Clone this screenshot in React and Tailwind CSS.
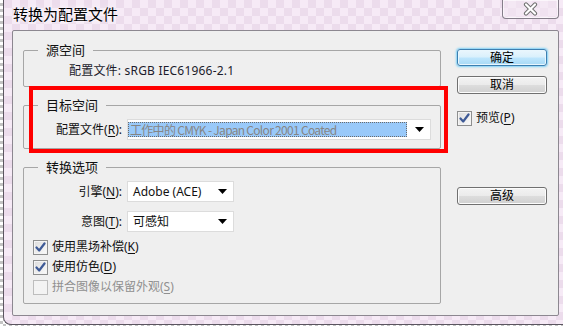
import React from "react";

function Arrow() {
  return (
    <svg width="9" height="5" viewBox="0 0 9 5" className="shrink-0">
      <path d="M0 0 H9 L4.5 5 Z" fill="#000" />
    </svg>
  );
}

function Check({ checked, disabled, children }) {
  return (
    <div className="flex items-center h-[20px]">
      <span
        className={
          disabled
            ? "w-[15px] h-[15px] border border-[#bdbdbd] bg-[#f3f3f3] shrink-0"
            : "w-[15px] h-[15px] border border-[#8e8f8f] bg-[linear-gradient(135deg,#dcdcdc,#fbfbfb)] shrink-0 flex items-center justify-center shadow-[inset_0_0_0_1px_#f4f4f4]"
        }
      >
        {checked && (
          <svg width="11" height="11" viewBox="0 0 11 11">
            <path d="M1.5 5.5 L4.2 8.5 L9.5 1.5" fill="none" stroke="#3e5a96" strokeWidth="2.2" strokeLinecap="round" strokeLinejoin="round" />
          </svg>
        )}
      </span>
      <span className={disabled ? "ml-[4px] text-[12px] leading-[16px] text-[#8f8f8f]" : "ml-[4px] text-[12px] leading-[16px]"}>
        {children}
      </span>
    </div>
  );
}

function U({ children }) {
  return <span className="underline underline-offset-[2px]">{children}</span>;
}

function GrayButton({ children }) {
  return (
    <div className="h-[18px] rounded-[3px] border border-[#707070] bg-[linear-gradient(#f3f3f3_0%,#ebebeb_48%,#dddddd_52%,#d0d0d0_100%)] shadow-[inset_0_0_0_1px_#fcfcfc] flex items-center justify-center text-[12px] leading-[14px] text-black">
      {children}
    </div>
  );
}

export default function App() {
  return (
    <div className="w-[563px] h-[326px] overflow-hidden flex pl-[3px] bg-[image:repeating-conic-gradient(#c4c4c4_0%_25%,#ffffff_0%_50%)] bg-[length:6px_6px] font-['Noto_Sans','Noto_Sans_CJK_SC',sans-serif] text-[#111]">
      <div className="w-[560px] h-[325px] shrink-0 flex flex-col border-l border-b border-[#5b5560] rounded-bl-[8px] bg-[#efe2ef] bg-[image:repeating-conic-gradient(#f6eaf6_0%_25%,#ecdcec_0%_50%)] bg-[length:16px_16px]">
        {/* title bar */}
        <div className="h-[30px] shrink-0 flex items-start">
          <div className="pl-[9px] pt-[4px] text-[15px] leading-[20px] text-black [text-shadow:0_0_6px_#ffffff,0_0_3px_#ffffff]">
            转换为配置文件
          </div>
          <div className="ml-auto mr-[4px] w-[57px] h-[19px] border border-t-0 border-[#857e8a] rounded-b-[4px] bg-[#f3e6f3]/60 shadow-[inset_0_0_0_1px_rgba(255,255,255,0.6)] flex items-center justify-center">
            <svg width="15" height="14" viewBox="0 0 15 14">
              <path d="M3 2.5 L12 11.5 M12 2.5 L3 11.5" stroke="#6f6f6f" strokeWidth="4.2" strokeLinecap="round" />
              <path d="M3 2.5 L12 11.5 M12 2.5 L3 11.5" stroke="#ffffff" strokeWidth="2.2" strokeLinecap="round" />
            </svg>
          </div>
        </div>

        {/* client area */}
        <div className="relative ml-[8px] mr-[4px] h-[286px] shrink-0 border border-[#8c8790] rounded-[2px] bg-[#efefef] flex pl-[10px] pt-[10px]">
          {/* left column */}
          <div className="w-[418px] flex flex-col">
            <fieldset className="border border-[#a6a6a6] rounded-[2px]">
              <legend className="ml-[14px] px-[8px] text-[13px] leading-[18px]">源空间</legend>
              <div className="mt-[4px] mb-[7px] pl-[45px] text-[12px] leading-[16px] text-[#1b1b2b] tracking-[0.2px]">
                配置文件: sRGB IEC61966-2.1
              </div>
            </fieldset>

            <fieldset className="mt-[9px] border border-[#a6a6a6] rounded-[2px]">
              <legend className="ml-[14px] px-[8px] text-[13px] leading-[18px]">目标空间</legend>
              <div className="mt-[5px] mb-[8px] flex items-center">
                <div className="w-[98px] text-right text-[12px] leading-[16px]">
                  配置文件(<U>R</U>):
                </div>
                <div className="ml-[5px] w-[304px] h-[21px] shrink-0 bg-white border border-[#dcdcdc] flex items-center pr-[6px]">
                  <div className="w-[279px] h-[15px] bg-[#99c9f9] border border-dotted border-[#6a6a6a] flex items-center pl-[1px] font-['Noto_Sans_CJK_SC',sans-serif] text-[12px] leading-[14px] tracking-[-0.7px] text-[#858585] whitespace-nowrap">
                    工作中的 CMYK - Japan Color 2001 Coated
                  </div>
                  <div className="ml-auto">
                    <Arrow />
                  </div>
                </div>
              </div>
            </fieldset>

            <fieldset className="mt-[9px] border border-[#a6a6a6] rounded-[2px]">
              <legend className="ml-[14px] px-[8px] text-[13px] leading-[18px]">转换选项</legend>
              <div className="mt-[5px] flex items-center">
                <div className="w-[98px] text-right text-[12px] leading-[16px]">
                  引擎(<U>N</U>):
                </div>
                <div className="ml-[5px] w-[107px] h-[21px] shrink-0 bg-white border border-[#dcdcdc] flex items-center pl-[5px] pr-[6px] text-[12px] leading-[16px]">
                  <span>Adobe (ACE)</span>
                  <div className="ml-auto">
                    <Arrow />
                  </div>
                </div>
              </div>
              <div className="mt-[9px] flex items-center">
                <div className="w-[98px] text-right text-[12px] leading-[16px]">
                  意图(<U>T</U>):
                </div>
                <div className="ml-[5px] w-[107px] h-[21px] shrink-0 bg-white border border-[#dcdcdc] flex items-center pl-[5px] pr-[6px] text-[12px] leading-[16px]">
                  <span>可感知</span>
                  <div className="ml-auto">
                    <Arrow />
                  </div>
                </div>
              </div>
              <div className="mt-[5px] mb-[6px] pl-[9px] flex flex-col">
                <Check checked>
                  使用黑场补偿(<U>K</U>)
                </Check>
                <Check checked>
                  使用仿色(<U>D</U>)
                </Check>
                <Check disabled>
                  拼合图像以保留外观(<U>S</U>)
                </Check>
              </div>
            </fieldset>
          </div>

          {/* right column */}
          <div className="ml-[16px] w-[90px] flex flex-col">
            <div className="mt-[8px] h-[17px] rounded-[3px] border border-[#3c7fb1] bg-[linear-gradient(#eaf6fd_0%,#d9f0fc_48%,#bee6fd_52%,#a7d9f5_100%)] shadow-[0_0_2px_1px_#7fd0f6,inset_0_0_0_1px_#e8f6fd] flex items-center justify-center text-[12px] leading-[14px] text-black">
              确定
            </div>
            <div className="mt-[10px]">
              <GrayButton>取消</GrayButton>
            </div>
            <div className="mt-[14px]">
              <Check checked>
                预览(<U>P</U>)
              </Check>
            </div>
            <div className="mt-[59px]">
              <GrayButton>高级</GrayButton>
            </div>
          </div>

          {/* red annotation box */}
          <div className="absolute left-[16px] top-[55px] w-[419px] h-[67px] border-[4px] border-[#ff0000] pointer-events-none" />
        </div>
      </div>
    </div>
  );
}
